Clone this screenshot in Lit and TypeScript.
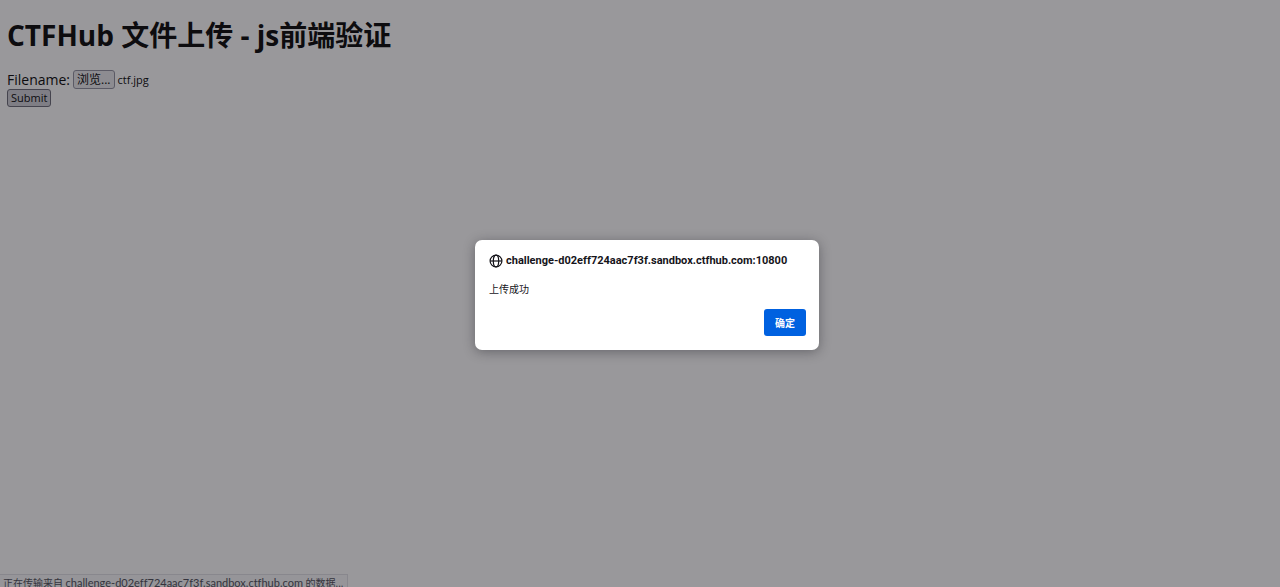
import { LitElement, html, css } from "lit";
import { customElement, property, state } from "lit/decorators.js";

const HOST = "challenge-d02eff724aac7f3f.sandbox.ctfhub.com";

@customElement("upload-form")
class UploadForm extends LitElement {
  @state() private filename = "ctf.jpg";

  static styles = css`
    :host {
      display: block;
      padding: 16px 7px;
      font-size: 14px;
      line-height: 19px;
    }
    h1 {
      margin: 0 0 16px;
      font-size: 28px;
      line-height: 38px;
      font-weight: 700;
    }
    form {
      display: flex;
      flex-direction: column;
      align-items: flex-start;
    }
    .row {
      display: flex;
      align-items: center;
      gap: 3px;
    }
    .picker {
      display: none;
    }
    .file {
      font-size: 11px;
    }
    button {
      box-sizing: border-box;
      height: 18px;
      padding: 0 3px;
      border: 1px solid #8f8f9d;
      border-radius: 3px;
      background: #e9e9ed;
      color: #000;
      font-family: inherit;
      font-size: 11px;
      line-height: 16px;
    }
    .browse {
      height: 19px;
      font-size: 12px;
    }
    .submit {
      background: #d0d0d7;
      border-color: #676774;
    }
  `;

  private get picker() {
    return this.renderRoot.querySelector<HTMLInputElement>("#file")!;
  }

  render() {
    return html`
      <h1>CTFHub 文件上传 - js前端验证</h1>
      <form @submit=${(e: Event) => e.preventDefault()}>
        <div class="row">
          <label for="file">Filename:</label>
          <input
            class="picker"
            id="file"
            type="file"
            @change=${() => (this.filename = this.picker.files?.[0]?.name ?? "")}
          />
          <button class="browse" type="button" @click=${() => this.picker.click()}>浏览...</button>
          <span class="file">${this.filename}</span>
        </div>
        <button class="submit" type="submit">Submit</button>
      </form>
    `;
  }
}

@customElement("alert-dialog")
class AlertDialog extends LitElement {
  @property() origin = "";
  @property() message = "";

  static styles = css`
    :host {
      display: block;
      box-sizing: border-box;
      width: 344px;
      max-width: 100%;
      padding: 13px 13px 14px 14px;
      border-radius: 7px;
      background: #fff;
      color: #15141a;
      box-shadow: 0 2px 12px rgba(28, 27, 34, 0.4);
      font-size: 10px;
      line-height: 16px;
    }
    header {
      display: flex;
      align-items: center;
      gap: 3px;
    }
    .globe {
      flex: none;
      width: 14px;
      height: 14px;
      fill: none;
      stroke: currentColor;
      stroke-width: 1.2;
    }
    h2 {
      margin: 0;
      font-family: Roboto, sans-serif;
      font-size: 11px;
      line-height: 16px;
      font-weight: 700;
      white-space: nowrap;
    }
    p {
      margin: 12px 0;
    }
    footer {
      display: flex;
      justify-content: flex-end;
    }
    button {
      height: 27px;
      padding: 0 11px;
      border: 0;
      border-radius: 3px;
      background: #0061e0;
      color: #fbfbfe;
      font-family: inherit;
      font-size: 10px;
      font-weight: 700;
    }
  `;

  render() {
    return html`
      <header>
        <svg class="globe" viewBox="0 0 14 14" aria-hidden="true">
          <circle cx="7" cy="7" r="5.9" />
          <ellipse cx="7" cy="7" rx="2.7" ry="5.9" />
          <path d="M1.1 7h11.8" />
        </svg>
        <h2>${this.origin}</h2>
      </header>
      <p>${this.message}</p>
      <footer><button type="button">确定</button></footer>
    `;
  }
}

@customElement("app-root")
class AppRoot extends LitElement {
  static styles = css`
    :host {
      display: block;
      position: relative;
      min-height: 100vh;
      overflow: hidden;
      background: #fff;
      color: #000;
      font-family: "Open Sans", "Noto Sans CJK SC", sans-serif;
    }
    .status {
      position: absolute;
      left: 0;
      bottom: 0;
      box-sizing: border-box;
      height: 13px;
      padding: 0 4px 0 3px;
      border: 1px solid #e0e0e6;
      border-left: 0;
      border-bottom: 0;
      background: #f9f9fb;
      color: #4a4a55;
      font-size: 10px;
      line-height: 16px;
      white-space: nowrap;
    }
    .host {
      font-family: Lato, sans-serif;
      font-size: 11px;
      font-variant-ligatures: none;
    }
    .scrim {
      position: absolute;
      inset: 0;
      display: flex;
      align-items: center;
      justify-content: center;
      padding: 3px 0 0 14px;
      background: rgba(28, 27, 34, 0.45);
    }
  `;

  render() {
    return html`
      <upload-form></upload-form>
      <div class="status" role="status">正在传输来自 <span class="host">${HOST}</span> 的数据...</div>
      <div class="scrim">
        <alert-dialog
          role="alertdialog"
          aria-label="上传成功"
          .origin=${`${HOST}:10800`}
          .message=${"上传成功"}
        ></alert-dialog>
      </div>
    `;
  }
}
